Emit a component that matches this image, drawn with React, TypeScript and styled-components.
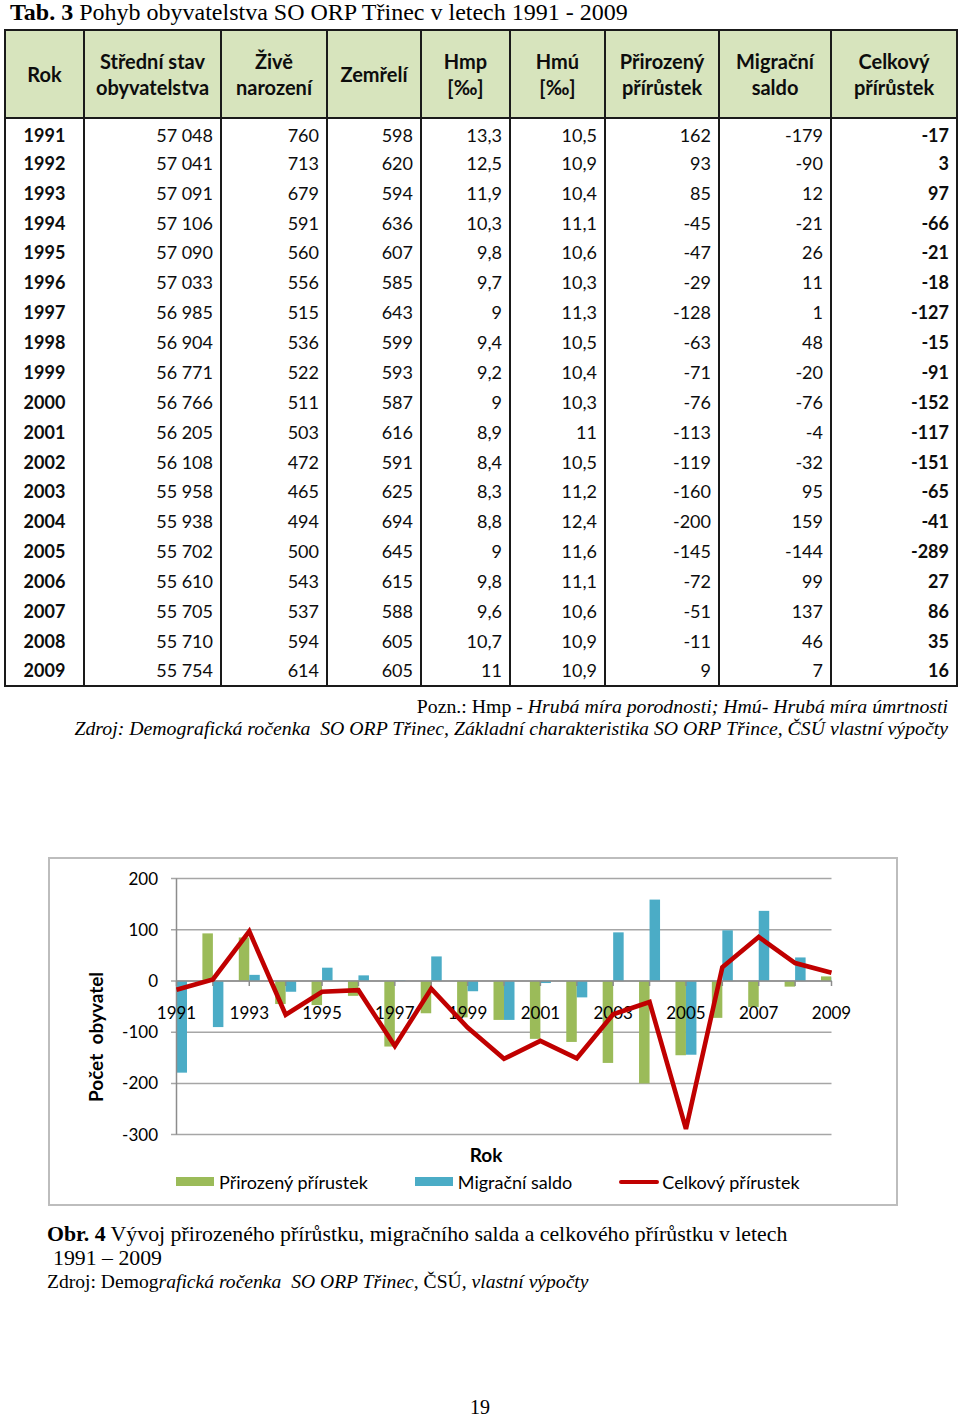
import React from 'react';
import styled, { createGlobalStyle } from 'styled-components';

const GlobalStyle = createGlobalStyle`
  body {
    margin: 0;
    background: #ffffff;
  }
`;

type RowData = [number, string, number, number, string, string, number, number, number];

const rows: RowData[] = [
  [1991, '57 048', 760, 598, '13,3', '10,5', 162, -179, -17],
  [1992, '57 041', 713, 620, '12,5', '10,9', 93, -90, 3],
  [1993, '57 091', 679, 594, '11,9', '10,4', 85, 12, 97],
  [1994, '57 106', 591, 636, '10,3', '11,1', -45, -21, -66],
  [1995, '57 090', 560, 607, '9,8', '10,6', -47, 26, -21],
  [1996, '57 033', 556, 585, '9,7', '10,3', -29, 11, -18],
  [1997, '56 985', 515, 643, '9', '11,3', -128, 1, -127],
  [1998, '56 904', 536, 599, '9,4', '10,5', -63, 48, -15],
  [1999, '56 771', 522, 593, '9,2', '10,4', -71, -20, -91],
  [2000, '56 766', 511, 587, '9', '10,3', -76, -76, -152],
  [2001, '56 205', 503, 616, '8,9', '11', -113, -4, -117],
  [2002, '56 108', 472, 591, '8,4', '10,5', -119, -32, -151],
  [2003, '55 958', 465, 625, '8,3', '11,2', -160, 95, -65],
  [2004, '55 938', 494, 694, '8,8', '12,4', -200, 159, -41],
  [2005, '55 702', 500, 645, '9', '11,6', -145, -144, -289],
  [2006, '55 610', 543, 615, '9,8', '11,1', -72, 99, 27],
  [2007, '55 705', 537, 588, '9,6', '10,6', -51, 137, 86],
  [2008, '55 710', 594, 605, '10,7', '10,9', -11, 46, 35],
  [2009, '55 754', 614, 605, '11', '10,9', 9, 7, 16],
];

const headers: string[][] = [
  ['Rok'],
  ['Střední stav', 'obyvatelstva'],
  ['Živě', 'narození'],
  ['Zemřelí'],
  ['Hmp', '[‰]'],
  ['Hmú', '[‰]'],
  ['Přirozený', 'přírůstek'],
  ['Migrační', 'saldo'],
  ['Celkový', 'přírůstek'],
];

const colWidths = [79, 137, 106, 94, 89, 95, 114, 112, 126];

const Page = styled.div`
  width: 960px;
  height: 1418px;
  font-family: 'Liberation Serif', 'Times New Roman', serif;
  color: #000000;
  overflow: hidden;
`;

const TableTitle = styled.div`
  height: 29px;
  padding-left: 10px;
  font-size: 24px;
  line-height: 24px;
  white-space: nowrap;
`;

const DataTable = styled.table`
  margin-left: 4px;
  width: 952px;
  border-collapse: collapse;
  table-layout: fixed;
  border: 2px solid #1a1a1a;
  font-family: Lato, 'Liberation Sans', sans-serif;
  color: #0d0d0d;
`;

const HeadCell = styled.th`
  height: 86px;
  padding: 0 2px;
  background: #d7e4bd;
  border: 2px solid #1a1a1a;
  font-size: 20px;
  font-weight: 700;
  line-height: 26px;
  text-align: center;
  vertical-align: middle;
`;

const BodyRow = styled.tr`
  height: 29.88px;

  &:first-child td {
    padding-top: 3px;
  }
`;

const Cell = styled.td<{ $bold?: boolean; $center?: boolean }>`
  padding: 0 7px 0 0;
  border-left: 2px solid #1a1a1a;
  border-right: 2px solid #1a1a1a;
  font-size: 18px;
  line-height: 20px;
  font-weight: ${(p) => (p.$bold ? 700 : 400)};
  text-align: ${(p) => (p.$center ? 'center' : 'right')};
  padding-left: ${(p) => (p.$center ? '7px' : '0')};
  white-space: nowrap;
`;

const Notes = styled.div`
  margin-top: 8px;
  padding-right: 12px;
  text-align: right;
  font-size: 19.8px;
  line-height: 22px;
  white-space: nowrap;
`;

const ChartFrame = styled.div`
  box-sizing: border-box;
  margin: 118px 0 0 48px;
  width: 850px;
  height: 349px;
  border: 2px solid #bdbdbd;
  padding-bottom: 11px;
`;

const ChartSvg = styled.svg`
  display: block;
  font-family: Lato, 'Liberation Sans', sans-serif;
`;

const Legend = styled.div`
  display: flex;
  align-items: center;
  gap: 47px;
  height: 22px;
  padding-left: 126px;
  font-family: Lato, 'Liberation Sans', sans-serif;
  font-size: 18px;
  color: #000000;
`;

const LegendItem = styled.div<{ $gap: number }>`
  display: flex;
  align-items: center;
  gap: ${(p) => p.$gap}px;
  white-space: nowrap;
`;

const Swatch = styled.span<{ $color: string; $line?: boolean }>`
  display: block;
  width: ${(p) => (p.$line ? 40 : 38)}px;
  height: ${(p) => (p.$line ? 4 : 9)}px;
  border-radius: ${(p) => (p.$line ? 2 : 0)}px;
  background: ${(p) => p.$color};
`;

const Caption = styled.div`
  margin-top: 16px;
  padding-left: 47px;
  font-size: 21.8px;
  line-height: 24px;
`;

const CaptionYears = styled.div`
  padding-left: 6px;
`;

const CaptionSource = styled.div`
  font-size: 19.6px;
`;

const PageNumber = styled.div`
  margin-top: 101px;
  text-align: center;
  font-size: 20px;
  line-height: 24px;
`;

const GREEN = '#9bbb59';
const BLUE = '#4bacc6';
const RED = '#c00000';

const X0 = 176.5;
const X1 = 831.5;
const STEP = (X1 - X0) / 18;
const Y0 = 981;
const K = 0.512;
const xAt = (i: number) => X0 + i * STEP;
const yAt = (v: number) => Y0 - v * K;

function Chart() {
  const ticks = [200, 100, 0, -100, -200, -300];
  const linePoints = rows.map((r, i) => `${xAt(i)},${yAt(r[8])}`).join(' ');

  return (
    <ChartSvg width={846} height={312} viewBox="50 859 846 312">
      <defs>
        <clipPath id="plot">
          <rect x={X0} y={870} width={X1 - X0} height={270} />
        </clipPath>
      </defs>

      {ticks.map((t) => (
        <g key={t}>
          <line x1={171} x2={X1} y1={yAt(t)} y2={yAt(t)} stroke="#a6a6a6" strokeWidth={1.5} />
          <text x={158} y={yAt(t) + 6} textAnchor="end" fontSize={17} fill="#000">
            {t}
          </text>
        </g>
      ))}

      <g clipPath="url(#plot)">
        {rows.map((r, i) => {
          const g = r[6];
          const b = r[7];
          return (
            <g key={r[0]}>
              <rect x={xAt(i) - 10.5} y={Math.min(yAt(g), Y0)} width={10.5} height={Math.abs(g) * K} fill={GREEN} />
              <rect x={xAt(i)} y={Math.min(yAt(b), Y0)} width={10.5} height={Math.abs(b) * K} fill={BLUE} />
            </g>
          );
        })}
      </g>

      <line x1={X0} x2={X0} y1={yAt(200)} y2={yAt(-300)} stroke="#8c8c8c" strokeWidth={1.5} />
      <line x1={X0} x2={X1} y1={Y0} y2={Y0} stroke="#8c8c8c" strokeWidth={1.5} />
      {rows.map((r, i) => (
        <line key={r[0]} x1={xAt(i)} x2={xAt(i)} y1={Y0} y2={Y0 + 5} stroke="#8c8c8c" strokeWidth={1.5} />
      ))}

      {rows.map((r, i) =>
        i % 2 === 0 ? (
          <text key={r[0]} x={xAt(i)} y={1019} textAnchor="middle" fontSize={17} fill="#000">
            {r[0]}
          </text>
        ) : null,
      )}

      <polyline points={linePoints} fill="none" stroke={RED} strokeWidth={4.6} strokeLinejoin="miter" strokeMiterlimit={3} />

      <text
        x={97}
        y={1043}
        transform="rotate(-90 97 1037)"
        textAnchor="middle"
        fontSize={19}
        fontWeight={700}
        fill="#000"
        style={{ whiteSpace: 'pre' }}
      >
        {'Počet  obyvatel'}
      </text>
      <text x={486} y={1162} textAnchor="middle" fontSize={19} fontWeight={700} fill="#000">
        Rok
      </text>
    </ChartSvg>
  );
}

export default function App() {
  return (
    <Page>
      <GlobalStyle />
      <TableTitle>
        <b>Tab. 3</b> Pohyb obyvatelstva SO ORP Třinec v letech 1991 - 2009
      </TableTitle>

      <DataTable>
        <colgroup>
          {colWidths.map((w, i) => (
            <col key={i} style={{ width: w }} />
          ))}
        </colgroup>
        <thead>
          <tr>
            {headers.map((h) => (
              <HeadCell key={h.join()}>
                {h.map((line, j) => (
                  <div key={j}>{line}</div>
                ))}
              </HeadCell>
            ))}
          </tr>
        </thead>
        <tbody>
          {rows.map((r) => (
            <BodyRow key={r[0]}>
              <Cell $bold $center>
                {r[0]}
              </Cell>
              <Cell>{r[1]}</Cell>
              <Cell>{r[2]}</Cell>
              <Cell>{r[3]}</Cell>
              <Cell>{r[4]}</Cell>
              <Cell>{r[5]}</Cell>
              <Cell>{r[6]}</Cell>
              <Cell>{r[7]}</Cell>
              <Cell $bold>{r[8]}</Cell>
            </BodyRow>
          ))}
        </tbody>
      </DataTable>

      <Notes>
        <div>
          Pozn.: Hmp - <i>Hrubá míra porodnosti; Hmú- Hrubá míra úmrtnosti</i>
        </div>
        <div>
          <i>Zdroj: Demografická ročenka&nbsp; SO ORP Třinec, Základní charakteristika SO ORP Třince, ČSÚ vlastní výpočty</i>
        </div>
      </Notes>

      <ChartFrame>
        <Chart />
        <Legend>
          <LegendItem $gap={5}>
            <Swatch $color={GREEN} />
            Přirozený přírustek
          </LegendItem>
          <LegendItem $gap={5}>
            <Swatch $color={BLUE} />
            Migrační saldo
          </LegendItem>
          <LegendItem $gap={3}>
            <Swatch $color={RED} $line />
            Celkový přírustek
          </LegendItem>
        </Legend>
      </ChartFrame>

      <Caption>
        <div>
          <b>Obr. 4</b> Vývoj přirozeného přírůstku, migračního salda a celkového přírůstku v letech
        </div>
        <CaptionYears>1991 – 2009</CaptionYears>
        <CaptionSource>
          Zdroj: Demog<i>rafická ročenka&nbsp; SO ORP Třinec, </i>ČSÚ<i>, vlastní výpočty</i>
        </CaptionSource>
      </Caption>

      <PageNumber>19</PageNumber>
    </Page>
  );
}
